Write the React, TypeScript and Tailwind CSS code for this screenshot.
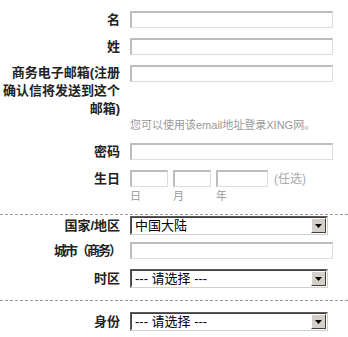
import React from "react";

const font = { fontFamily: '"Liberation Sans", "Noto Sans CJK SC", sans-serif' };

function TextBox({ w = "w-[203px]" }: { w?: string }) {
  return (
    <div
      className={`${w} h-[17px] bg-white border-t-2 border-l-2 border-r border-b border-t-[#bdbdbd] border-l-[#bdbdbd] border-r-[#dddddd] border-b-[#dddddd]`}
    />
  );
}

function Select({ value }: { value: string }) {
  return (
    <div className="w-[198px] h-[19px] flex bg-white border border-t-[#5a5a5a] border-l-[#5a5a5a] border-r-[#d4d0c8] border-b-[#d4d0c8]">
      <div className="flex-1 flex border border-t-[#404040] border-l-[#404040] border-r-white border-b-white">
        <div className="flex-1 pl-[3px] text-[13px] leading-[15px] text-black">
          {value}
        </div>
        <div className="w-[15px] h-[15px] bg-[#d4d0c8] border border-t-white border-l-white border-r-[#404040] border-b-[#404040] flex items-center justify-center">
          <svg width="7" height="4" viewBox="0 0 7 4">
            <path d="M0 0h7L3.5 4z" fill="#000" />
          </svg>
        </div>
      </div>
    </div>
  );
}

function Label({ children, tall }: { children: React.ReactNode; tall?: boolean }) {
  return (
    <div
      className={`w-[120px] shrink-0 text-right font-bold text-[13px] text-[#222] ${
        tall ? "leading-[18px]" : "leading-[17px]"
      }`}
    >
      {children}
    </div>
  );
}

function Dashed() {
  return <div className="border-t border-dashed border-[#999]" />;
}

export default function App() {
  return (
    <div className="w-[348px] h-[337px] bg-white overflow-hidden" style={font}>
      {/* 名 */}
      <div className="flex items-center gap-[10px] mt-[11px] h-[17px]">
        <Label>名</Label>
        <TextBox />
      </div>

      {/* 姓 */}
      <div className="flex items-center gap-[10px] mt-[10px] h-[17px]">
        <Label>姓</Label>
        <TextBox />
      </div>

      {/* email */}
      <div className="flex items-start gap-[10px] mt-[9px]">
        <Label tall>商务电子邮箱(注册确认信将发送到这个邮箱)</Label>
        <div className="mt-[1px]">
          <TextBox />
        </div>
      </div>
      <div className="pl-[130px] text-[11px] leading-[14px] text-[#999] whitespace-nowrap">
        您可以使用该email地址登录XING网。
      </div>

      {/* 密码 */}
      <div className="flex items-center gap-[10px] mt-[11px] h-[17px]">
        <Label>密码</Label>
        <TextBox />
      </div>

      {/* 生日 */}
      <div className="flex items-center gap-[10px] mt-[10px] h-[17px]">
        <Label>生日</Label>
        <div className="flex items-center gap-[5px]">
          <TextBox w="w-[38px]" />
          <TextBox w="w-[38px]" />
          <TextBox w="w-[52px]" />
          <span className="ml-[1px] text-[12px] text-[#aaa]">(任选)</span>
        </div>
      </div>
      <div className="flex pl-[130px] gap-[5px] mt-[2px] text-[11px] leading-[14px] text-[#999]">
        <span className="w-[38px]">日</span>
        <span className="w-[38px]">月</span>
        <span className="w-[52px]">年</span>
      </div>

      <div className="mt-[11px]">
        <Dashed />
      </div>

      {/* 国家/地区 */}
      <div className="flex items-center gap-[10px] mt-[1px]">
        <Label>国家/地区</Label>
        <Select value="中国大陆" />
      </div>

      {/* 城市 */}
      <div className="flex items-center gap-[10px] mt-[7px] h-[17px]">
        <Label>
          <span className="tracking-[-2px]">城市（商务）</span>
        </Label>
        <TextBox />
      </div>

      {/* 时区 */}
      <div className="flex items-center gap-[10px] mt-[10px]">
        <Label>时区</Label>
        <Select value="--- 请选择 ---" />
      </div>

      <div className="mt-[12px]">
        <Dashed />
      </div>

      {/* 身份 */}
      <div className="flex items-center gap-[10px] mt-[11px]">
        <Label>身份</Label>
        <Select value="--- 请选择 ---" />
      </div>
    </div>
  );
}
